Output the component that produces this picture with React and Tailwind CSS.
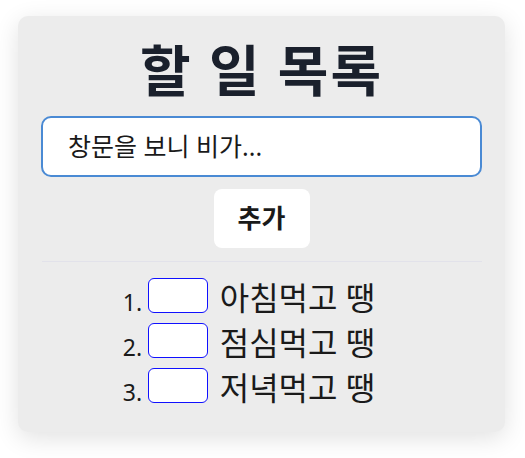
const todos = ['아침먹고 땡', '점심먹고 땡', '저녁먹고 땡'];

export default function App() {
  return (
    <div
      className="min-h-screen bg-white pt-4"
      style={{ fontFamily: '"Noto Sans", "Noto Sans CJK KR", sans-serif' }}
    >
      <div className="ml-[18px] w-[487px] rounded-[10px] bg-[#ececec] px-[23px] pt-[26px] pb-[29px] shadow-[0_6px_24px_rgba(0,0,0,0.12)]">
        <h1 className="text-center text-[55px] font-bold leading-none tracking-[2px] text-[#1a202c]">
          할 일 목록
        </h1>

        <div className="mt-[19px] flex h-[61px] items-center rounded-[10px] border-2 border-[#4a8ad4] bg-white pl-[25px] text-[25px] text-[#1a1a1a]">
          창문을 보니 비가...
        </div>

        <div className="mt-3 flex justify-center">
          <button className="h-[59px] w-[96px] rounded-lg bg-white text-[26px] font-bold text-[#1a1a1a]">
            추가
          </button>
        </div>

        <div className="mx-auto mt-[13px] h-px w-[440px] bg-[#e2e2ea]" />

        <ol className="mt-4 flex flex-col gap-[10px]">
          {todos.map((t, i) => (
            <li key={t} className="flex items-end justify-center text-[#1a1a1a]">
              <span className="-ml-[25px] w-[25px] pr-[6px] text-right text-[23px] leading-[0.9]">
                {i + 1}.
              </span>
              <span className="h-[35px] w-[60px] rounded-md border border-[#1010ff] bg-white" />
              <span className="ml-3 text-[32px] leading-[0.9]">{t}</span>
            </li>
          ))}
        </ol>
      </div>
    </div>
  );
}
